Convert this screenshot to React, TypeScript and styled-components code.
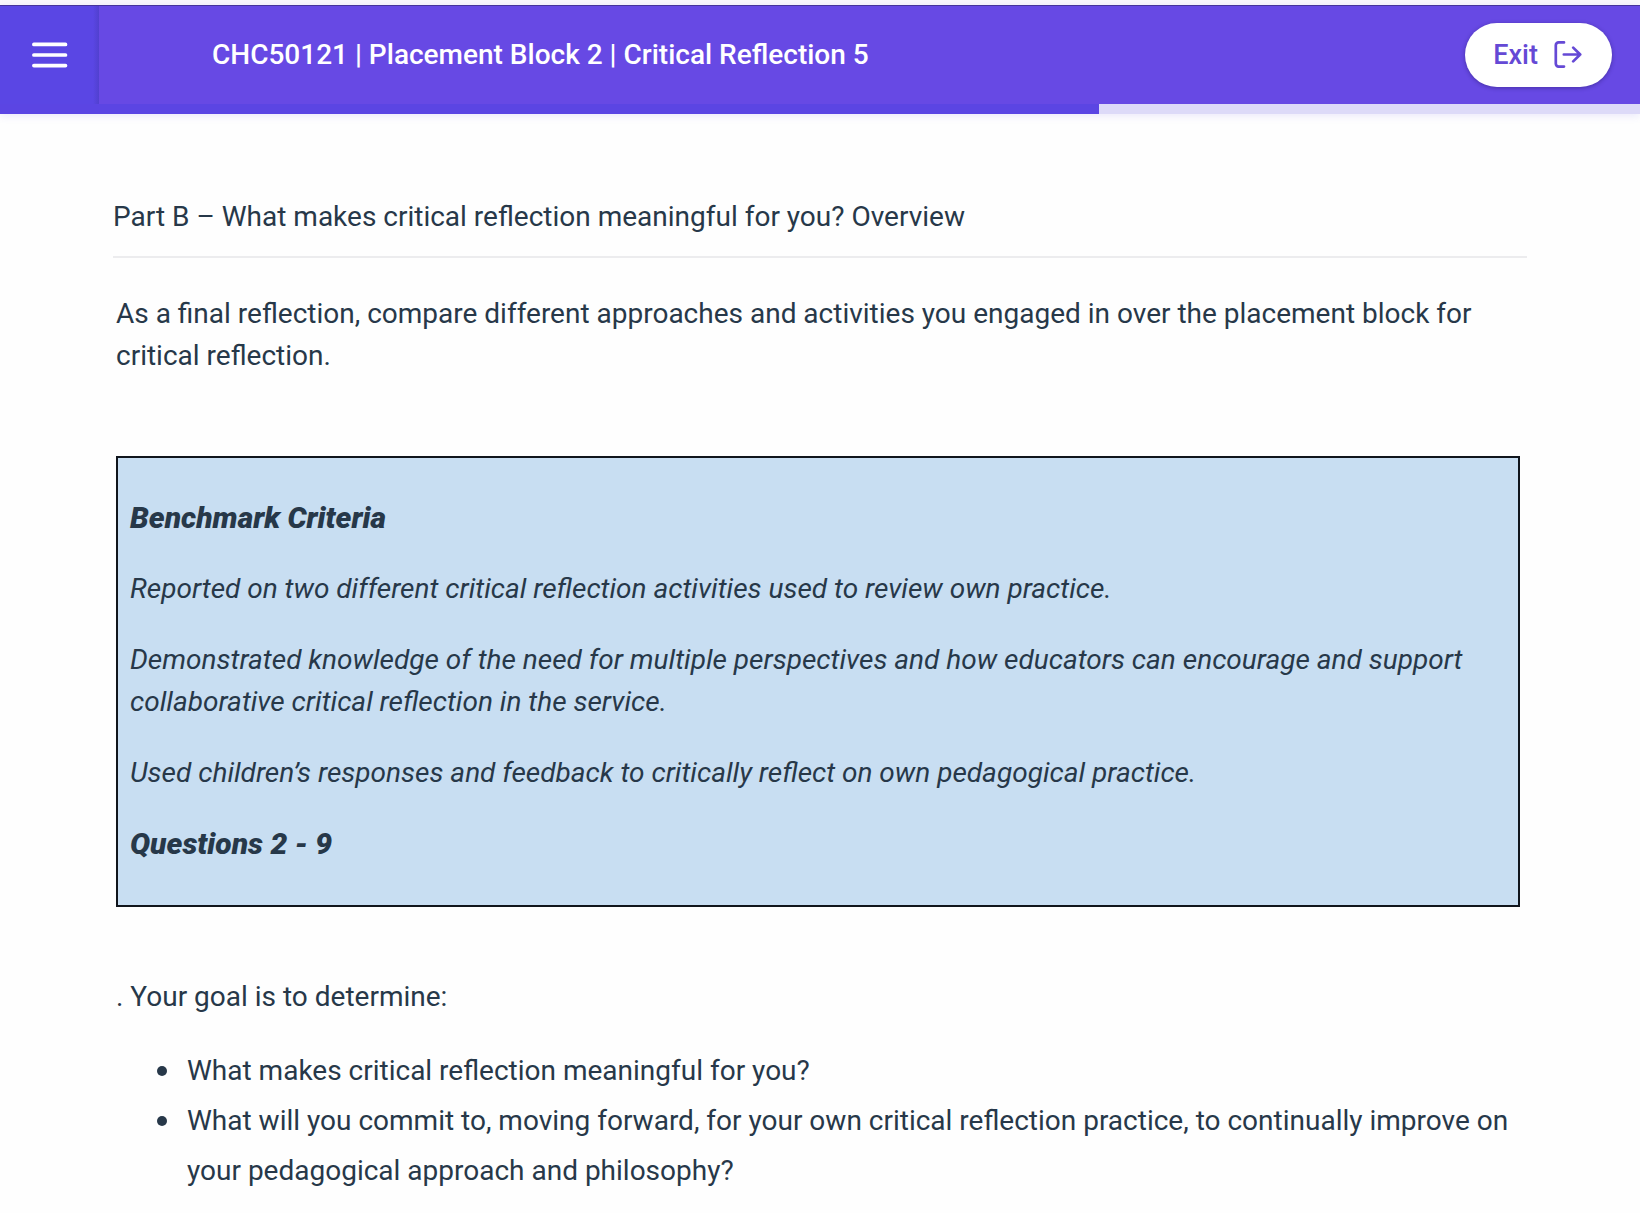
import React from "react";
import styled, { createGlobalStyle } from "styled-components";

const GlobalStyle = createGlobalStyle`
  *, *::before, *::after { box-sizing: border-box; }
  body {
    margin: 0;
    background: #fefefe;
    color: #273849;
    font-family: Roboto, "Liberation Sans", sans-serif;
    font-size: 28px;
    line-height: 42px;
  }
`;

const Page = styled.div`
  padding-top: 5px;
  background: linear-gradient(#faf8fc 5px, transparent 5px);
`;

const Header = styled.header`
  box-shadow: 0 2px 8px rgba(90, 70, 228, 0.12);
`;

const Toolbar = styled.div`
  display: flex;
  align-items: stretch;
  height: 99px;
  border-top: 1px solid #46349c;
  background: #6749e4;
  color: #ffffff;
`;

const MenuButton = styled.button`
  display: flex;
  align-items: center;
  justify-content: center;
  flex: none;
  width: 99px;
  padding: 0;
  border: 0;
  background: linear-gradient(to left, #5140cf, #5a46e4 6px);
  color: inherit;
  cursor: pointer;
`;

const Title = styled.h1`
  flex: 1;
  align-self: center;
  margin: 0;
  padding: 0 32px 0 113px;
  font-size: 28px;
  font-weight: 500;
`;

const ExitButton = styled.button`
  display: flex;
  align-items: center;
  justify-content: center;
  align-self: center;
  gap: 16px;
  flex: none;
  height: 64px;
  margin-right: 28px;
  padding: 0 30px 0 28px;
  border: 0;
  border-radius: 32px;
  background: #ffffff;
  box-shadow: 0 1px 4px rgba(30, 20, 90, 0.45);
  color: #6549d5;
  font-family: inherit;
  font-size: 27px;
  font-weight: 500;
  cursor: pointer;
`;

const ProgressTrack = styled.div`
  height: 10px;
  background: #dddaf8;
`;

const ProgressFill = styled.div`
  height: 100%;
  background: #5b45e3;
`;

const Main = styled.main`
  padding: 82px 113px 10px;
`;

const SectionTitle = styled.h2`
  margin: 0;
  padding-bottom: 18px;
  border-bottom: 2px solid #ececee;
  font-size: 28px;
  font-weight: 400;
`;

const Content = styled.div`
  padding: 35px 7px 0 3px;
`;

const Paragraph = styled.p`
  margin: 0;
`;

const Criteria = styled.section`
  display: flex;
  flex-direction: column;
  gap: 29px;
  margin: 79px 0 69px;
  padding: 39px 12px 40px;
  border: 2px solid #10151c;
  background: #c8def2;
  font-style: italic;
`;

const CriteriaHeading = styled.h3`
  margin: 0;
  font-size: 30px;
  font-weight: 900;
  line-height: 42px;
`;

const Goals = styled.ul`
  margin: 28px 0 0;
  padding-left: 41px;
  line-height: 50px;
  list-style: none;
`;

const Goal = styled.li`
  display: grid;
  grid-template-columns: 10px 1fr;
  column-gap: 20px;

  &::before {
    content: "";
    height: 10px;
    margin-top: 20px;
    border-radius: 50%;
    background: currentColor;
  }
`;

const MenuIcon = () => (
  <svg width="36" height="26" viewBox="0 0 36 26" fill="none" stroke="currentColor" strokeWidth="3.7" strokeLinecap="round" aria-hidden="true">
    <path d="M1.9 2.4h31.6M1.9 13h31.6M1.9 23.6h31.6" />
  </svg>
);

const ExitIcon = () => (
  <svg width="28" height="28" viewBox="0 0 28 28" fill="none" stroke="currentColor" strokeWidth="2.7" strokeLinecap="round" strokeLinejoin="round" aria-hidden="true">
    <path d="M10 1.4H4.6a2.8 2.8 0 0 0-2.8 2.8v18.6a2.8 2.8 0 0 0 2.8 2.8H10" />
    <path d="M9.8 13.5h16.4M19.2 6.6l7 6.9-7 6.9" />
  </svg>
);

const progress = 67;

const criteria = [
  "Reported on two different critical reflection activities used to review own practice.",
  "Demonstrated knowledge of the need for multiple perspectives and how educators can encourage and support collaborative critical reflection in the service.",
  "Used children’s responses and feedback to critically reflect on own pedagogical practice.",
];

const goals = [
  "What makes critical reflection meaningful for you?",
  "What will you commit to, moving forward, for your own critical reflection practice, to continually improve on your pedagogical approach and philosophy?",
];

export default function App() {
  return (
    <Page>
      <GlobalStyle />
      <Header>
        <Toolbar>
          <MenuButton type="button" aria-label="Open menu">
            <MenuIcon />
          </MenuButton>
          <Title>CHC50121 | Placement Block 2 | Critical Reflection 5</Title>
          <ExitButton type="button">
            Exit
            <ExitIcon />
          </ExitButton>
        </Toolbar>
        <ProgressTrack role="progressbar" aria-label="Progress" aria-valuenow={progress} aria-valuemin={0} aria-valuemax={100}>
          <ProgressFill style={{ width: `${progress}%` }} />
        </ProgressTrack>
      </Header>
      <Main>
        <SectionTitle>Part B – What makes critical reflection meaningful for you? Overview</SectionTitle>
        <Content>
          <Paragraph>
            As a final reflection, compare different approaches and activities you engaged in over the placement block for
            critical reflection.
          </Paragraph>
          <Criteria>
            <CriteriaHeading>Benchmark Criteria</CriteriaHeading>
            {criteria.map((text) => (
              <Paragraph key={text}>{text}</Paragraph>
            ))}
            <CriteriaHeading>Questions 2 - 9</CriteriaHeading>
          </Criteria>
          <Paragraph>. Your goal is to determine:</Paragraph>
          <Goals>
            {goals.map((text) => (
              <Goal key={text}>{text}</Goal>
            ))}
          </Goals>
        </Content>
      </Main>
    </Page>
  );
}
